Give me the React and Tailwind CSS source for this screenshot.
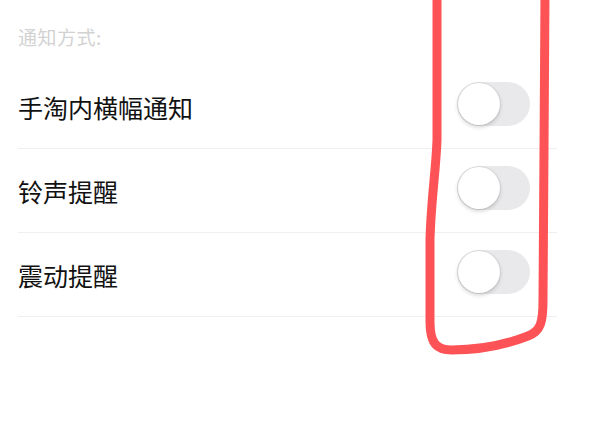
import React, { useState } from 'react';

const ITEMS = ['手淘内横幅通知', '铃声提醒', '震动提醒'];

function Toggle({ on, onChange }) {
  return (
    <button
      onClick={onChange}
      className={`relative w-[73px] h-[44px] rounded-full shrink-0 transition-colors ${
        on ? 'bg-[#4cd964]' : 'bg-[#e9e9eb]'
      }`}
    >
      <span
        className={`absolute top-[1px] w-[42px] h-[42px] rounded-full bg-white shadow-[0_2px_4px_rgba(0,0,0,0.18),0_0_0_1px_rgba(0,0,0,0.05)] transition-all ${
          on ? 'left-[30px]' : 'left-[1px]'
        }`}
      />
    </button>
  );
}

export default function App() {
  const [flags, setFlags] = useState([false, false, false]);

  return (
    <div
      className="relative w-[596px] h-[422px] bg-white overflow-hidden"
      style={{ fontFamily: '"Noto Sans CJK SC", "Noto Sans", sans-serif' }}
    >
      {/* Section title */}
      <div className="h-[65px] pl-[18px] pt-[26px]">
        <p className="text-[19px] leading-[22px] tracking-[0.5px] text-[#d2d2d2]">通知方式:</p>
      </div>

      {/* Settings list */}
      <div className="ml-[18px] w-[539px]">
        {ITEMS.map((label, i) => (
          <div
            key={label}
            className="h-[84px] flex items-center justify-between border-b border-[#efefef]"
          >
            <span className="text-[25px] leading-[32px] text-[#111111]">{label}</span>
            <div className="mr-[27px]">
              <Toggle
                on={flags[i]}
                onChange={() => setFlags(flags.map((f, j) => (j === i ? !f : f)))}
              />
            </div>
          </div>
        ))}
      </div>

      {/* Hand-drawn annotation */}
      <svg
        className="absolute inset-0 pointer-events-none"
        width="596"
        height="422"
        viewBox="0 0 596 422"
      >
        <path
          d="M437,-6 L437,140 C436,170 431,200 430,240 L430,322 C430,344 437,350 452,350 C482,350 510,343 528,336 C541,331 543,322 543,300 L544,150 L545,-6"
          fill="none"
          stroke="#fd5356"
          strokeWidth="9"
          strokeLinecap="round"
          strokeLinejoin="round"
        />
      </svg>
    </div>
  );
}
